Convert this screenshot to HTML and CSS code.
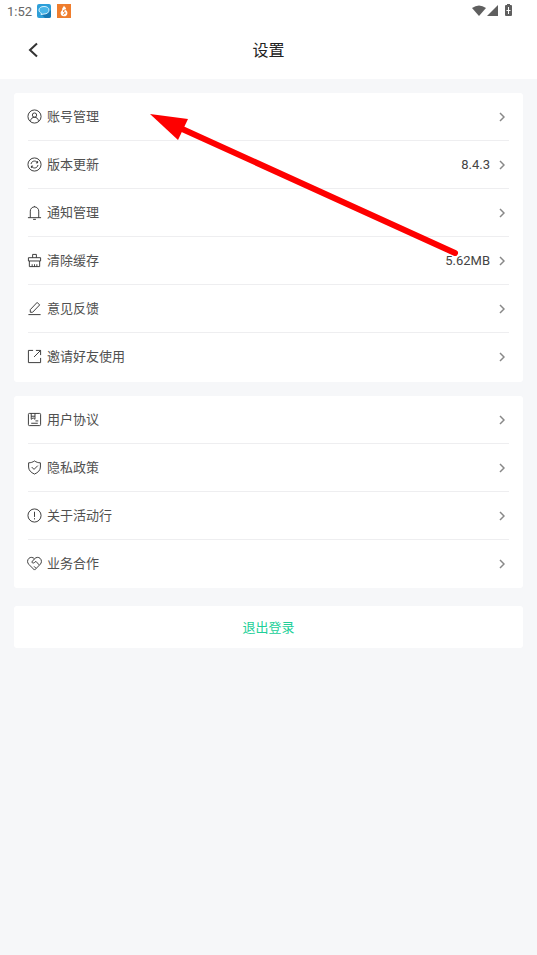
FILE: index.html
```html
<!DOCTYPE html>
<html lang="zh-CN">
<head>
<meta charset="utf-8">
<meta name="viewport" content="width=device-width, initial-scale=1">
<title>设置</title>
<link rel="stylesheet" href="styles.css">
</head>
<body>
<svg class="defs" aria-hidden="true">
  <symbol id="chevron" viewBox="0 0 6 10"><path d="M1 1l4 4-4 4"/></symbol>
</svg>
<header class="top">
  <div class="status">
    <span class="clock">1:52</span>
    <svg class="app" viewBox="0 0 14 14" aria-hidden="true">
      <rect width="14" height="14" rx="2" fill="#2d9fd9"/>
      <path d="M11 4l3 3v5a2 2 0 0 1-2 2H8l-4-4z" fill="#1678b4"/>
      <path d="M7 2.500c3 0 5 1.300 5 3.600S10 10 7 10l-3 .5.5-1.200C3 8.700 2 7.500 2 6.100 2 3.800 4 2.500 7 2.500z" fill="#48b5e8" stroke="#d9f3ff" stroke-width="1"/>
    </svg>
    <svg class="app" viewBox="0 0 14 14" aria-hidden="true">
      <rect width="14" height="14" fill="#ef7d2d"/>
      <path d="M7 1.500c.3 1.500 2 1.800 2 3.300L8.500 6c1.200.7 1.900 1.500 1.900 2.900C10.400 11 9 12.300 7 12.300S3.600 11 3.600 9c0-1.400.8-2 1.600-2.800C4.600 4 6.600 3.500 7 1.500z" fill="#fff"/>
      <path d="M8.500 5.500L6 7l2.500 2L6 10.500" fill="none" stroke="#ef7d2d" stroke-width="1"/>
    </svg>
    <svg class="signals" viewBox="0 0 42 14" aria-hidden="true">
      <path d="M0 4Q7-1 14 4L7 12z" fill="#5f5f5f"/>
      <path d="M26 1v11H15z" fill="#5f5f5f"/>
      <path d="M33 2q0-1 1-1h1V0h3v1h1q1 0 1 1v9q0 1-1 1h-5q-1 0-1-1z" fill="#5f5f5f"/>
      <path d="M36.500 3v7M34.500 6.500h4" fill="none" stroke="#fff" stroke-width="1"/>
    </svg>
  </div>
  <div class="nav">
    <button class="back" type="button" aria-label="返回"><svg viewBox="0 0 10 16"><path d="M9 1.500L2 8l7 6.500"/></svg></button>
    <h1 class="title">设置</h1>
  </div>
</header>
<main class="content">
  <nav class="card card-main">
    <a class="row" href="#account"><svg class="icon" viewBox="0 0 16 16"><circle cx="8" cy="8" r="7"/><circle cx="8" cy="6.500" r="2.300"/><path d="M3.800 12.500c.4-2.300 2-3.700 4.200-3.700s3.800 1.400 4.200 3.700"/></svg><span class="label">账号管理</span><svg class="chevron"><use href="#chevron"/></svg></a>
    <a class="row" href="#version"><svg class="icon" viewBox="0 0 16 16"><circle cx="8" cy="8" r="7"/><path d="M4.300 7.500c.3-2 1.800-3.200 3.700-3.200 1.400 0 2.600.7 3.200 1.900M11.300 4.300v2H9.500M11.700 8.500c-.3 2-1.800 3.200-3.700 3.200-1.400 0-2.600-.7-3.200-1.900M4.700 11.700v-2h1.800"/></svg><span class="label">版本更新</span><span class="value">8.4.3</span><svg class="chevron"><use href="#chevron"/></svg></a>
    <a class="row" href="#notice"><svg class="icon" viewBox="0 0 16 16"><path d="M3.500 13.500V6.500a4.500 4.500 0 0 1 9 0v7M1 13.500h14M6.500 15.300h3M8 1v1"/></svg><span class="label">通知管理</span><svg class="chevron"><use href="#chevron"/></svg></a>
    <a class="row" href="#cache"><svg class="icon" viewBox="0 0 16 16"><path d="M6 5V1.500h4V5M1.500 8.500V5h13v3.500zM2.500 8.500v6h11v-6M5.500 14.500V12M8 14.500V12M10.500 14.500V12"/></svg><span class="label">清除缓存</span><span class="value">5.62MB</span><svg class="chevron"><use href="#chevron"/></svg></a>
    <a class="row" href="#feedback"><svg class="icon" viewBox="0 0 16 16"><path d="M3.500 12V9.200l7.300-7.700 2.700 2.700L6 12zM1.500 14.500h13"/></svg><span class="label">意见反馈</span><svg class="chevron"><use href="#chevron"/></svg></a>
    <a class="row" href="#invite"><svg class="icon" viewBox="0 0 16 16"><path d="M6.500 1.500h-5v13h13V9.500M9.500 1.500h5v5M14.500 1.500L7.500 8.500"/></svg><span class="label">邀请好友使用</span><svg class="chevron"><use href="#chevron"/></svg></a>
  </nav>
  <nav class="card">
    <a class="row" href="#terms"><svg class="icon" viewBox="0 0 16 16"><rect x="1.500" y="1.500" width="13" height="13" rx="1"/><path d="M4.500 1.500v6.300l2-1.600 2 1.600V1.500M4.500 4.500h4M9 9.500h3M4.500 12h7"/></svg><span class="label">用户协议</span><svg class="chevron"><use href="#chevron"/></svg></a>
    <a class="row" href="#privacy"><svg class="icon" viewBox="0 0 16 16"><path d="M8 1c1.800 1.300 4 2 6.300 2v4.500c0 3.500-2.500 5.800-6.300 7.500-3.800-1.700-6.300-4-6.300-7.500V3C4 3 6.200 2.300 8 1zM5 7.500l2.500 2.500 4-4"/></svg><span class="label">隐私政策</span><svg class="chevron"><use href="#chevron"/></svg></a>
    <a class="row" href="#about"><svg class="icon" viewBox="0 0 16 16"><circle cx="8" cy="8" r="7"/><path d="M8 4v5.500M8 10.800v1.400"/></svg><span class="label">关于活动行</span><svg class="chevron"><use href="#chevron"/></svg></a>
    <a class="row" href="#business"><svg class="icon" viewBox="0 0 16 16"><path d="M8 15L2 9C.1 7.200.2 4.200 2 2.500c1.700-1.600 4.300-1.300 6 .5 1.700-1.800 4.300-2.100 6-.5 1.800 1.700 1.900 4.700 0 6.500zM8 3L5 6.500c.8 1.200 2 1.300 3 .4l1.500-1.200L13 9.500M7.500 11l2 2"/></svg><span class="label">业务合作</span><svg class="chevron"><use href="#chevron"/></svg></a>
  </nav>
  <button class="logout" type="button">退出登录</button>
  <svg class="pointer" viewBox="0 0 310 145" aria-hidden="true">
    <path d="M30 14L305 139" fill="none" stroke="#fe0000" stroke-width="6" stroke-linecap="round"/>
    <path d="M0 0L38 5 28 26z" fill="#fe0000"/>
  </svg>
</main>
</body>
</html>
```
FILE: styles.css
```css
* {
  box-sizing: border-box;
}

body {
  margin: 0;
  min-height: 100vh;
  background: #f6f7f9;
  color: #505050;
  font-family: Roboto, "Noto Sans CJK SC", sans-serif;
  font-size: 13px;
}

.defs {
  position: absolute;
  width: 0;
  height: 0;
}

.top {
  background: #fff;
}

.status {
  display: flex;
  align-items: center;
  gap: 5px;
  height: 22px;
  padding: 0 23px 0 7px;
}

.clock {
  color: #666;
}

.app {
  width: 14px;
  height: 14px;
}

.app + .app {
  margin-left: 1px;
}

.signals {
  width: 42px;
  height: 14px;
  margin-left: auto;
}

.nav {
  display: grid;
  grid-template-columns: 38px 1fr 38px;
  align-items: center;
  height: 57px;
  padding: 0 14px 2px;
}

.back {
  display: flex;
  justify-content: center;
  padding: 8px 0;
  border: 0;
  background: none;
}

.back svg {
  width: 10px;
  height: 16px;
  fill: none;
  stroke: #333;
  stroke-width: 2;
}

.title {
  margin: 0;
  padding-bottom: 2px;
  color: #222;
  font-size: 16px;
  font-weight: 400;
  text-align: center;
}

.content {
  position: relative;
  padding: 14px;
}

.card {
  margin-bottom: 18px;
  border-radius: 3px;
  background: #fff;
}

.card-main {
  margin-bottom: 14px;
  padding-bottom: 1px;
}

.row {
  display: flex;
  align-items: center;
  height: 48px;
  margin: 0 14px;
  border-bottom: 1px solid #eeeef0;
  color: inherit;
  text-decoration: none;
}

.row:last-child {
  border-bottom-color: transparent;
}

.icon {
  width: 15px;
  height: 15px;
  margin: 0 5px 0 -1px;
  fill: none;
  stroke: #333;
  stroke-width: 1;
}

.label {
  flex: 1;
  padding-bottom: 2px;
}

.value {
  margin-right: 9px;
  color: #444;
}

.chevron {
  width: 6px;
  height: 10px;
  margin-right: 4px;
  fill: none;
  stroke: #888;
  stroke-width: 1.5;
}

.logout {
  display: block;
  width: 100%;
  height: 42px;
  padding: 0 0 2px;
  border: 0;
  border-radius: 3px;
  background: #fff;
  color: #20cf98;
  font: inherit;
}

.pointer {
  position: absolute;
  top: 35px;
  left: 150px;
  width: 310px;
  height: 145px;
  pointer-events: none;
}
```
